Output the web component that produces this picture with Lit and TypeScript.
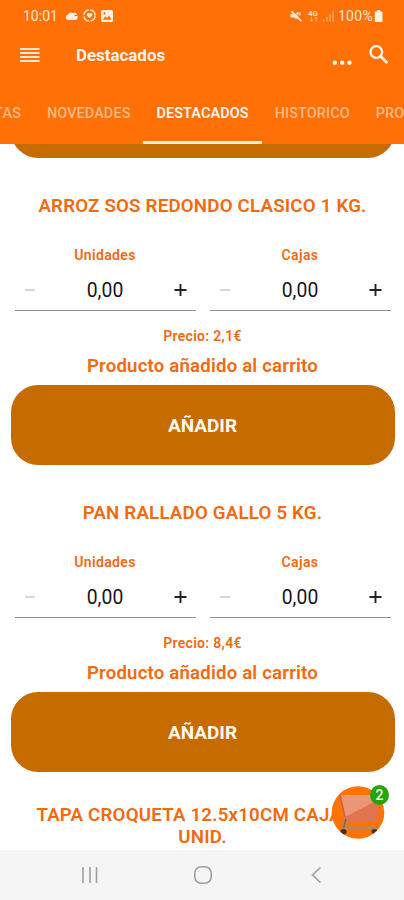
import { LitElement, html, css } from "lit";
import { customElement, property } from "lit/decorators.js";

@customElement("quantity-field")
class QuantityField extends LitElement {
  @property() label = "";
  static styles = css`
    :host { display: block; width: 181px; }
    .label { height: 20px; line-height: 20px; text-align: center; color: #f2690f; font-size: 14px; font-weight: 600; letter-spacing: 0.38px; }
    .row { display: grid; grid-template-columns: 30px 1fr 30px; align-items: center; height: 44.5px; border-bottom: 1.5px solid #8f8f8f; box-sizing: border-box; margin-top: 1px; }
    .value { text-align: center; font-size: 19.3px; color: #151515; padding-top: 5px; letter-spacing: 0.1px; }
    svg { display: block; margin: 5px auto 0; }
  `;
  render() {
    return html`
      <div class="label">${this.label}</div>
      <div class="row">
        <svg width="14" height="14" viewBox="0 0 14 14"><path d="M2 7H12" stroke="#cfcfcf" stroke-width="1.7" /></svg>
        <div class="value">0,00</div>
        <svg width="14" height="14" viewBox="0 0 14 14"><path d="M.5 7H12.5M6.5 1V13" stroke="#222" stroke-width="1.9" /></svg>
      </div>`;
  }
}

@customElement("product-card")
class ProductCard extends LitElement {
  @property() name = "";
  @property() price = "";
  static styles = css`
    :host { display: flex; flex-direction: column; align-items: center; height: 307px; flex: none; color: #f2690f; }
    .title { display: flex; align-items: center; margin-top: 31.5px; min-height: 34px; width: 350px; flex: none; }
    .title span { flex: 1; text-align: center; font-size: 18.7px; line-height: 22.5px; font-weight: 600; letter-spacing: 0.2px; }
    .fields { display: flex; gap: 14px; margin-top: 21.5px; }
    .price { margin-top: 15px; line-height: 20px; font-size: 14px; font-weight: 600; letter-spacing: 0.32px; }
    .added { margin-top: 8px; line-height: 24px; font-size: 18.6px; font-weight: 600; letter-spacing: 0.2px; }
    .add { margin-top: 7px; width: 384px; height: 80.5px; flex: none; border-radius: 27px; background: #c66b00; color: #fff8ee; display: flex; align-items: center; justify-content: center; box-sizing: border-box; padding-top: 2px; font-size: 19px; font-weight: 700; }
  `;
  render() {
    return html`
      <div class="title"><span>${this.name}</span></div>
      ${this.price
        ? html`<div class="fields">
              <quantity-field label="Unidades"></quantity-field>
              <quantity-field label="Cajas"></quantity-field>
            </div>
            <div class="price">Precio: ${this.price}€</div>
            <div class="added">Producto añadido al carrito</div>
            <div class="add">AÑADIR</div>`
        : ""}`;
  }
}

@customElement("app-root")
class AppRoot extends LitElement {
  static styles = css`
    :host { display: flex; flex-direction: column; position: relative; width: 404px; height: 900px; overflow: hidden; background: #fff; font-family: Roboto, sans-serif; }
    svg { display: block; flex: none; }
    header { height: 143.5px; flex: none; background: #ff7006; color: #fff3e8; overflow: hidden; }
    .status { display: flex; align-items: center; justify-content: space-between; height: 31px; padding: 0 20px 0 23px; color: #ffe6d2; font-size: 14px; }
    .group { display: flex; align-items: center; }
    .left { gap: 5px; }
    .left svg:nth-child(2) { margin-left: 2px; }
    .percent { letter-spacing: 0.3px; }
    .bar { display: flex; align-items: center; height: 48px; padding: 0 15px 0 20px; }
    .heading { margin-left: 36px; flex: 1; font-size: 16.9px; font-weight: 700; }
    .search { margin-left: 17px; }
    .tabs { display: flex; justify-content: center; height: 64.5px; width: 600px; margin-left: -102.5px; }
    .tab { display: flex; align-items: center; justify-content: center; flex: none; padding: 8px 13px 0; box-sizing: border-box; font-size: 14.4px; font-weight: 500; letter-spacing: 0.12px; color: #ffb982; border-bottom: 3px solid transparent; }
    .tab.on { color: #fff6ee; border-color: #ffeee0; font-weight: 600; }
    main { flex: 1; min-height: 0; overflow: hidden; display: flex; flex-direction: column; padding-left: 1px; }
    .previous { height: 14.5px; flex: none; overflow: hidden; display: flex; flex-direction: column; justify-content: flex-end; align-items: center; }
    .previous div { flex: none; width: 384px; height: 80.5px; border-radius: 27px; background: #c66b00; }
    product-card:last-child { height: 78px; }
    nav { height: 50px; flex: none; background: #f5f5f5; display: flex; align-items: center; padding-left: 80px; }
    .home { margin-left: 93px; }
    .back { margin-left: 98px; }
    .cart { position: absolute; left: 330px; top: 783px; }
    .count { position: absolute; left: 370px; top: 785px; width: 19px; height: 20px; line-height: 20px; border-radius: 50%; text-align: center; color: #eaffdf; background: #25a50d; font-size: 14px; font-weight: 500; }
  `;
  render() {
    const tabs = ["OFERTAS", "NOVEDADES", "DESTACADOS", "HISTORICO", "PROMOS"];
    return html`
      <header>
        <div class="status">
          <div class="group left">
            <span>10:01</span>
            <svg width="13" height="10" viewBox="0 0 13 10"><path d="M3 9a2.7 2.7 0 0 1-.3-5.3A3.6 3.6 0 0 1 8 2.2 2.5 2.5 0 0 1 12 4H9.5v1H12.6V7A2.5 2.5 0 0 1 10.5 9Z" fill="#ffeede" /></svg>
            <svg width="13" height="13" viewBox="0 0 13 13"><circle cx="6.5" cy="6.5" r="5.6" fill="none" stroke="#ffe6d2" stroke-width="1.4" stroke-dasharray="7.5 1.3" /><path d="M6.5 9.3 4 6.7a1.4 1.4 0 0 1 2.5-1.9A1.4 1.4 0 0 1 9 6.7Z" fill="#ffe6d2" /></svg>
            <svg width="12" height="12" viewBox="0 0 12 12"><rect width="12" height="12" rx="1.5" fill="#ffeede" /><path d="M1.8 9.8 4.3 6.3 6 8 8.3 5.5l2 4.3Z" fill="#ff7006" /><circle cx="3.6" cy="3.4" r="1.1" fill="#ff7006" /></svg>
          </div>
          <div class="group">
            <svg width="13" height="14" viewBox="0 0 13 14"><path d="M.5 5H4L8.5 2.8V9L6 10 4.2 8.6H.5Z" fill="#ffe6d2" /><path d="M10 3.2v3.4" stroke="#ffe6d2" stroke-width="1.2" /><path d="M2.4 1.4 12.5 11.3" stroke="#ff7006" stroke-width=".9" /><path d="M1.4 2.4 11.6 12.4" stroke="#ffe6d2" stroke-width="1.9" /></svg>
            <svg width="35" height="14" viewBox="0 0 35 14" font-family="Roboto" fill="#ffdcc2"><text x="5" y="6.5" font-size="8" font-weight="700">4G</text><path d="M8.5 8v4M7 10.5l1.5 2 1.5-2M13 13V8M11.5 10l1.5-2 1.5 2" fill="none" stroke="#ffb27a" stroke-width=".9" /><path d="M20 12.5h1.5v-2H20ZM23 12.5h1.7V8H23ZM26.2 12.5h1.7V5.3h-1.7ZM29.2 12.5h1.6V2h-1.6Z" fill="#ffa362" /></svg>
            <span class="percent">100%</span>
            <svg width="11" height="14" viewBox="0 0 11 14"><path d="M4.2 1h3v1.4h1.3a1 1 0 0 1 1 1V13H1.8V3.4a1 1 0 0 1 1-1h1.4Z" fill="#fff3e8" /></svg>
          </div>
        </div>
        <div class="bar">
          <svg width="20" height="16" viewBox="0 0 20 16"><path d="M0 2h19.5M0 6h19.5M0 10h19.5M0 14h19.5" stroke="#ffe6d2" stroke-width="1.9" /></svg>
          <div class="heading">Destacados</div>
          <svg width="20" height="24" viewBox="0 0 20 24"><g fill="#fff3e8"><circle cx="2.8" cy="19.8" r="2.2" /><circle cx="10.2" cy="19.8" r="2.2" /><circle cx="17.5" cy="19.8" r="2.2" /></g></svg>
          <svg class="search" width="20" height="22" viewBox="0 0 20 22"><circle cx="7.3" cy="8" r="5.8" fill="none" stroke="#fff3e8" stroke-width="2.3" /><path d="m11.5 12.3 6.8 6.8" stroke="#fff3e8" stroke-width="2.8" /></svg>
        </div>
        <div class="tabs">${tabs.map((t, i) => html`<div class="tab ${i === 2 ? "on" : ""}">${t}</div>`)}</div>
      </header>
      <main>
        <div class="previous"><div></div></div>
        <product-card name="ARROZ SOS REDONDO CLASICO 1 KG." price="2,1"></product-card>
        <product-card name="PAN RALLADO GALLO 5 KG." price="8,4"></product-card>
        <product-card name="TAPA CROQUETA 12.5x10CM CAJA 50 UNID."></product-card>
      </main>
      <nav>
        <svg width="20" height="18" viewBox="0 0 20 18"><path d="M3 1v16M10 1v16M16.5 1v16" stroke="#a0a0a0" stroke-width="1.6" /></svg>
        <svg class="home" width="20" height="20" viewBox="0 0 20 20"><rect x="1.8" y="1.8" width="16.4" height="16.4" rx="6.3" fill="none" stroke="#a0a0a0" stroke-width="1.6" /></svg>
        <svg class="back" width="16" height="18" viewBox="0 0 16 18"><path d="M9.5 1.5 1.5 9l8 7.5" fill="none" stroke="#a0a0a0" stroke-width="1.6" /></svg>
      </nav>
      <svg class="cart" width="56" height="58" viewBox="0 0 56 58">
        <defs><clipPath id="disc"><circle cx="28" cy="29.5" r="26.3" /></clipPath></defs>
        <circle cx="28" cy="29.5" r="26.3" fill="#ff7204" />
        <g clip-path="url(#disc)">
          <path d="M10 12H47.5L48 38 15 40Z" fill="#e07350" />
          <path d="M10 12H46L42 20 15 34Z" fill="#ea9677" />
          <path d="M10 12 15 34" fill="none" stroke="#d0633c" stroke-width="1.6" />
          <path d="M16 36 13 47M15 45H47" fill="none" stroke="#b08a62" stroke-width="3" />
          <path d="M16 36 13.5 45" stroke="#8c6347" stroke-width="1.6" />
          <ellipse cx="13.5" cy="48.8" rx="3" ry="2.8" fill="#3d2f39" /><ellipse cx="44.5" cy="48.5" rx="3" ry="2.4" fill="#4c3138" />
        </g>
      </svg>
      <div class="count">2</div>`;
  }
}
